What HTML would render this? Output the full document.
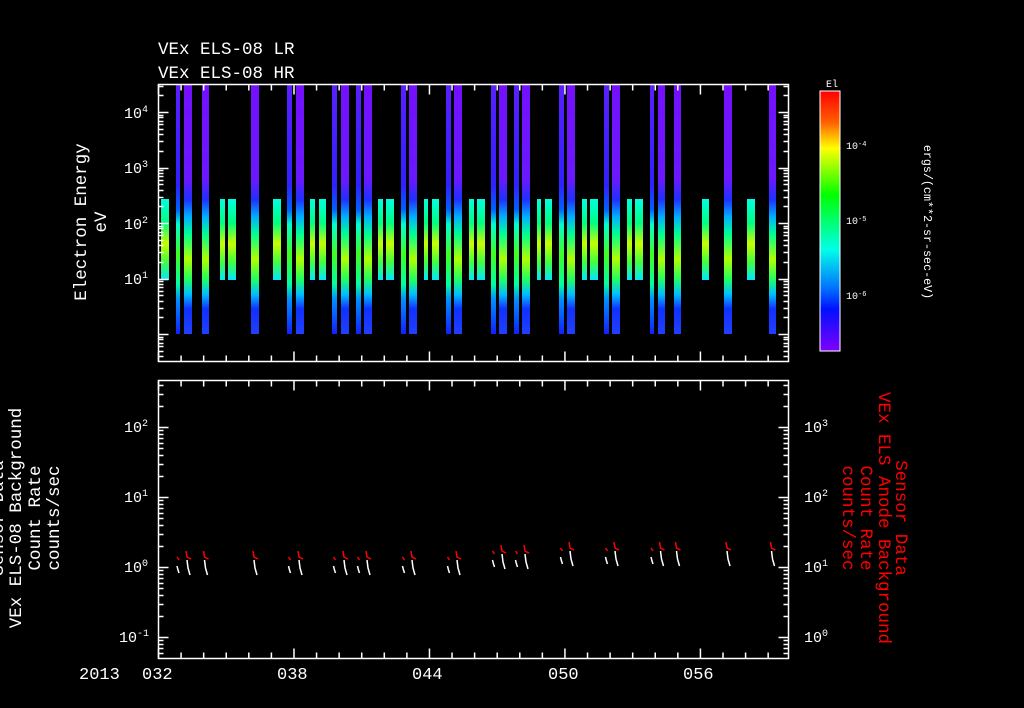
<!DOCTYPE html>
<html><head><meta charset="utf-8"><style>
html,body{margin:0;padding:0;background:#000;width:1024px;height:708px;overflow:hidden}
svg{display:block}
text{font-family:"Liberation Mono",monospace;fill:#fff}
</style></head><body>
<svg id="s" width="1024" height="708" viewBox="0 0 1024 708" xmlns="http://www.w3.org/2000/svg">
<defs>
<linearGradient id="gt" x1="0" y1="0" x2="0" y2="1">
<stop offset="0" stop-color="#7410ff"/><stop offset="0.38" stop-color="#6a18ff"/>
<stop offset="0.46" stop-color="#2030ff"/><stop offset="0.53" stop-color="#00b0ff"/>
<stop offset="0.6" stop-color="#00ff90"/><stop offset="0.7" stop-color="#b0ff00"/>
<stop offset="0.78" stop-color="#20ff60"/><stop offset="0.84" stop-color="#00c0ff"/>
<stop offset="0.9" stop-color="#1030ff"/><stop offset="1" stop-color="#2040ff"/>
</linearGradient>
<linearGradient id="gn" x1="0" y1="0" x2="0" y2="1">
<stop offset="0" stop-color="#5a20ff"/><stop offset="0.4" stop-color="#3020ff"/>
<stop offset="0.5" stop-color="#0060ff"/><stop offset="0.56" stop-color="#00ffd0"/>
<stop offset="0.68" stop-color="#40ff20"/><stop offset="0.8" stop-color="#00ffa0"/>
<stop offset="0.86" stop-color="#0090ff"/><stop offset="1" stop-color="#1020ff"/>
</linearGradient>
<linearGradient id="gs" x1="0" y1="0" x2="0" y2="1">
<stop offset="0" stop-color="#00ffe0"/><stop offset="0.3" stop-color="#00ff80"/>
<stop offset="0.55" stop-color="#c8ff00"/><stop offset="0.78" stop-color="#40ff40"/>
<stop offset="1" stop-color="#00e8ff"/>
</linearGradient>
<linearGradient id="gc" x1="0" y1="0" x2="0" y2="1">
<stop offset="0" stop-color="#ff0000"/><stop offset="0.12" stop-color="#ff6000"/>
<stop offset="0.22" stop-color="#ffff00"/><stop offset="0.4" stop-color="#00ff00"/>
<stop offset="0.61" stop-color="#00ffe8"/><stop offset="0.76" stop-color="#0070ff"/>
<stop offset="0.84" stop-color="#0010ff"/><stop offset="1" stop-color="#8000ff"/>
</linearGradient>
</defs>
<g id="bars"></g>
<g id="ax" stroke="#fff" stroke-width="1.5" fill="none"></g>
<g id="pts" fill="none" stroke-width="1.5"></g>
<text x="158" y="54" font-size="17.5">VEx ELS-08 LR</text>
<text x="158" y="78" font-size="17.5">VEx ELS-08 HR</text>
<rect x="820" y="91" width="20" height="260" fill="url(#gc)" stroke="#fff" stroke-width="1"/>
<text x="826" y="87" font-size="10">El</text>
<g font-size="10"><text x="846" y="149">10<tspan dy="-3" font-size="7">-4</tspan></text>
<text x="846" y="224">10<tspan dy="-3" font-size="7">-5</tspan></text>
<text x="846" y="299">10<tspan dy="-3" font-size="7">-6</tspan></text></g>
<text transform="translate(924,222) rotate(90)" font-size="11.7" text-anchor="middle">ergs/(cm**2-sr-sec-eV)</text>
<g font-size="15">
<text x="124" y="118">10<tspan dy="-6" font-size="10">4</tspan></text>
<text x="124" y="173">10<tspan dy="-6" font-size="10">3</tspan></text>
<text x="124" y="229">10<tspan dy="-6" font-size="10">2</tspan></text>
<text x="124" y="284">10<tspan dy="-6" font-size="10">1</tspan></text>
<text x="124" y="432">10<tspan dy="-6" font-size="10">2</tspan></text>
<text x="124" y="502">10<tspan dy="-6" font-size="10">1</tspan></text>
<text x="124" y="572">10<tspan dy="-6" font-size="10">0</tspan></text>
<text x="119" y="642">10<tspan dy="-6" font-size="10">-1</tspan></text>
<text x="804" y="432">10<tspan dy="-6" font-size="10">3</tspan></text>
<text x="804" y="502">10<tspan dy="-6" font-size="10">2</tspan></text>
<text x="804" y="572">10<tspan dy="-6" font-size="10">1</tspan></text>
<text x="804" y="642">10<tspan dy="-6" font-size="10">0</tspan></text>
</g>
<g font-size="17.5" text-anchor="middle">
<text transform="translate(86,222) rotate(-90)">Electron Energy</text>
<text transform="translate(106,222) rotate(-90)">eV</text>
<text transform="translate(3,518) rotate(-90)">Sensor Data</text>
<text transform="translate(21,518) rotate(-90)">VEx ELS-08 Background</text>
<text transform="translate(40,518) rotate(-90)">Count Rate</text>
<text transform="translate(59,518) rotate(-90)">counts/sec</text>
</g>
<g font-size="17.5" text-anchor="middle">
<text style="fill:#f00" transform="translate(896,518) rotate(90)">Sensor Data</text>
<text style="fill:#f00" transform="translate(879,518) rotate(90)">VEx ELS Anode Background</text>
<text style="fill:#f00" transform="translate(861,518) rotate(90)">Count Rate</text>
<text style="fill:#f00" transform="translate(843,518) rotate(90)">counts/sec</text>
</g>
<g font-size="17">
<text x="79" y="679">2013</text>
<text x="142" y="679">032</text>
<text x="277" y="679">038</text>
<text x="412" y="679">044</text>
<text x="548" y="679">050</text>
<text x="683" y="679">056</text>
</g>
</svg>
<script>
var NS="http://www.w3.org/2000/svg";
function el(p,t,a){var e=document.createElementNS(NS,t);for(var k in a)e.setAttribute(k,a[k]);document.getElementById(p).appendChild(e);return e;}
var tall=[[176,179],[184,191],[202,208],[251,258],[287,291],[296,303],[332,336],[341,348],[356,360],[364,371],[401,405],[409,416],[446,450],[454,461],[491,495],[499,506],[514,518],[522,529],[559,563],[567,574],[604,608],[612,619],[650,653],[658,664],[674,680],[724,731],[769,775]];
var shortb=[[161,168],[220,224],[228,235],[273,280],[310,314],[319,325],[378,382],[386,393],[424,427],[432,438],[469,473],[477,484],[537,540],[545,551],[582,586],[590,597],[627,631],[635,642],[702,708],[747,754]];
shortb.forEach(function(b){el("bars","rect",{x:b[0],y:199,width:b[1]-b[0]+1,height:81,fill:"url(#gs)"});});
tall.forEach(function(b){var w=b[1]-b[0]+1;el("bars","rect",{x:b[0],y:85,width:w,height:249,fill:w<6?"url(#gn)":"url(#gt)"});});
el("ax","rect",{x:158.5,y:84.5,width:630,height:277});
el("ax","rect",{x:158.5,y:380.5,width:630,height:278});
function xt(y0,y1,dir){for(var i=0;i<=28;i++){var x=158.5+i*22.58;if(x>788)break;var L=(i%6==0)?10:6;el("ax","line",{x1:x,y1:y0,x2:x,y2:y0+dir*L});el("ax","line",{x1:x,y1:y1,x2:x,y2:y1-dir*L});}}
xt(84.5,361.5,1);xt(380.5,658.5,1);
function yt(base,sp,top,bot){for(var d=-3;d<7;d++){for(var k=1;k<10;k++){var y=base-sp*(d+Math.log10(k));if(y<top||y>bot)continue;var L=k==1?10:5;y=Math.round(y)+0.5;el("ax","line",{x1:158.5,y1:y,x2:158.5+L,y2:y});el("ax","line",{x1:788.5,y1:y,x2:788.5-L,y2:y});}}}
yt(334,55.5,85,361);yt(567,70,381,658);
for(var d=-7;d<-3;d++)for(var k=1;k<10;k++){var y=145-75*(d+4+Math.log10(k));if(y<92||y>350)continue;y=Math.round(y)+0.5;el("ax","line",{x1:840,y1:y,x2:k==1?830:835,y2:y});}
tall.forEach(function(b,i){var w=b[1]-b[0]+1;var x=b[0]+w/2;var up=(b[0]>480?-6:0)+(b[0]>540?-3:0);
if(w<6){el("pts","polyline",{points:(x-1)+","+(557+up)+" "+(x+1)+","+(560+up),stroke:"#f00"});el("pts","polyline",{points:(x-1)+","+(566+up)+" "+(x)+","+(570+up)+" "+(x+1)+","+(573+up),stroke:"#fff"});}
else{el("pts","polyline",{points:(x-2)+","+(551+up)+" "+(x-1)+","+(557+up)+" "+(x+3)+","+(559+up),stroke:"#f00"});el("pts","polyline",{points:(x-1)+","+(560+up)+" "+(x)+","+(568+up)+" "+(x+2)+","+(575+up),stroke:"#fff"});}});
</script>
</body></html>
